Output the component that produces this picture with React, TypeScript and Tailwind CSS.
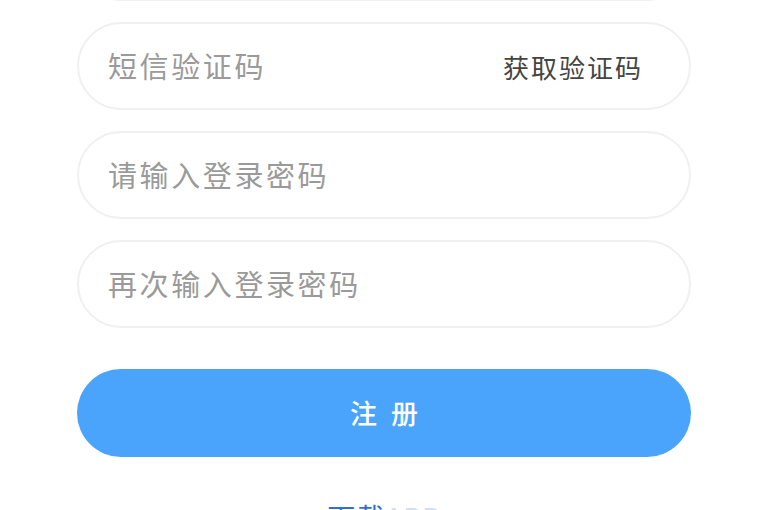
import { useState } from "react";

const font = { fontFamily: '"Noto Sans CJK SC", "Noto Sans", sans-serif' };

function Field({
	placeholder,
	value,
	onChange,
	type = "text",
	children,
}: Readonly<{
	placeholder: string;
	value: string;
	onChange: (v: string) => void;
	type?: string;
	children?: React.ReactNode;
}>) {
	return (
		<div className="flex h-[88px] items-center rounded-full border-2 border-[#f0f0f0] bg-white pl-[29px] pr-[46px]">
			<input
				type={type}
				value={value}
				placeholder={placeholder}
				onChange={(e) => onChange(e.target.value)}
				className="min-w-0 flex-1 bg-transparent text-[29px] tracking-[2.6px] text-[#555] outline-none placeholder:text-[#9a9a9a]"
			/>
			{children}
		</div>
	);
}

export default function App() {
	const [phone, setPhone] = useState("");
	const [code, setCode] = useState("");
	const [password, setPassword] = useState("");
	const [confirm, setConfirm] = useState("");

	return (
		<div className="h-[510px] overflow-hidden bg-white" style={font}>
			<div className="mx-auto -mt-[87px] flex w-[614px] flex-col">
				<div className="flex flex-col gap-[21px]">
					<Field placeholder="请输入手机号" value={phone} onChange={setPhone} />
					<Field placeholder="短信验证码" value={code} onChange={setCode}>
						<button className="text-[26px] tracking-[2px] text-[#444]">
							获取验证码
						</button>
					</Field>
					<Field
						type="password"
						placeholder="请输入登录密码"
						value={password}
						onChange={setPassword}
					/>
					<Field
						type="password"
						placeholder="再次输入登录密码"
						value={confirm}
						onChange={setConfirm}
					/>
				</div>
				<button className="mt-[41px] h-[88px] rounded-full bg-[#4ba4fc] text-[27px] font-medium tracking-[14px] text-white">
					<span className="pl-[14px]">注册</span>
				</button>
				<div className="mt-[40px] text-center text-[28px] leading-[40px] tracking-[1px]">
					<span className="text-[#2c6fd8]">下载</span>
					<span className="text-[#cfe0f0]">APP</span>
				</div>
			</div>
		</div>
	);
}
